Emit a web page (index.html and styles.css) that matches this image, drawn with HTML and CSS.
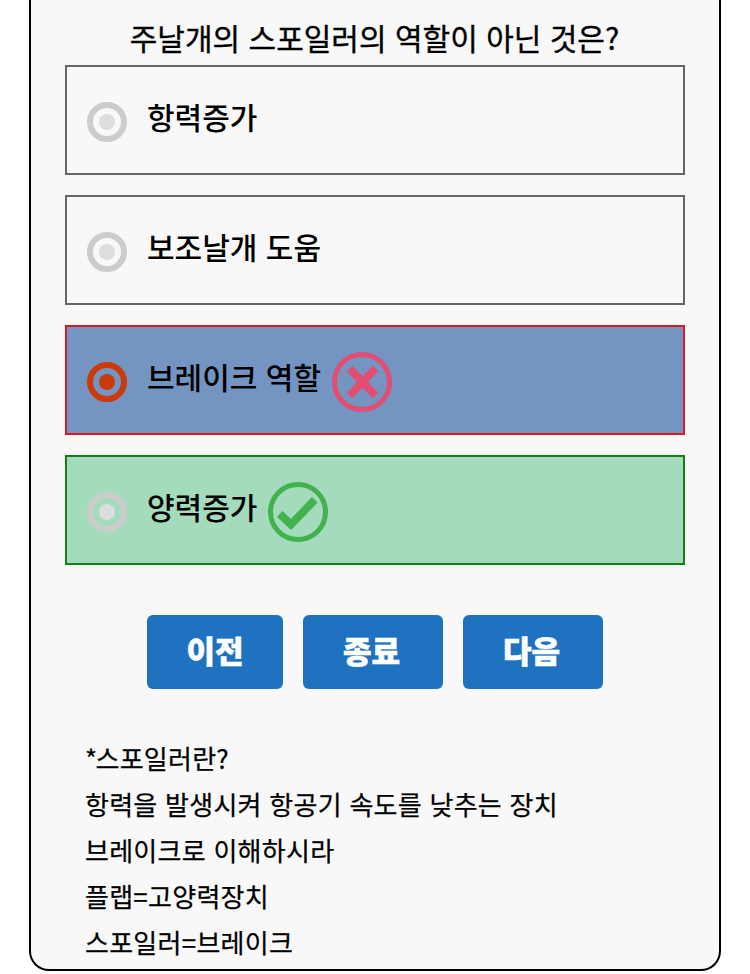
FILE: index.html
```
<!DOCTYPE html>
<html lang="ko">
<head>
<meta charset="utf-8">
<title>Quiz</title>
<link rel="stylesheet" href="styles.css">
</head>
<body>
<main class="quiz">
  <h1 class="question">주날개의 스포일러의 역할이 아닌 것은?</h1>
  <ul class="options">
    <li class="option"><svg class="radio" viewBox="0 0 40 40"><circle class="ring" cx="20" cy="20" r="17"/><circle class="dot" cx="20" cy="20" r="8"/></svg><span class="label">항력증가</span></li>
    <li class="option"><svg class="radio" viewBox="0 0 40 40"><circle class="ring" cx="20" cy="20" r="17"/><circle class="dot" cx="20" cy="20" r="8"/></svg><span class="label">보조날개 도움</span></li>
    <li class="option wrong"><svg class="radio" viewBox="0 0 40 40"><circle class="ring" cx="20" cy="20" r="17"/><circle class="dot" cx="20" cy="20" r="8"/></svg><span class="label">브레이크 역할</span>
      <svg class="mark" viewBox="0 0 60 60"><circle cx="30" cy="30" r="27.5"/><path d="M17.5 16.5L43.5 43.5M43.5 16.5L17.5 43.5"/></svg></li>
    <li class="option correct"><svg class="radio" viewBox="0 0 40 40"><circle class="ring" cx="20" cy="20" r="17"/><circle class="dot" cx="20" cy="20" r="8"/></svg><span class="label">양력증가</span>
      <svg class="mark" viewBox="0 0 60 60"><circle cx="30" cy="30" r="27.5"/><path d="M11.7 32L23 42.5L46.8 17.8"/></svg></li>
  </ul>
  <nav class="actions">
    <button class="prev">이전</button><button>종료</button><button>다음</button>
  </nav>
  <div class="notes">
    <p><span class="star">*</span>스포일러란?</p>
    <p>항력을 발생시켜 항공기 속도를 낮추는 장치</p>
    <p>브레이크로 이해하시라</p>
    <p>플랩=고양력장치</p>
    <p>스포일러=브레이크</p>
  </div>
</main>
</body>
</html>
```
FILE: styles.css
```
* { box-sizing: border-box; }
html { background: #fff; }
body { margin: 0; height: 974px; overflow: hidden; color: #000; font-family: "Noto Sans CJK KR", sans-serif; }
.quiz { width: 692px; height: 971px; margin-left: 29px; padding: 16px 34px 0; border: 2px solid #000; border-top: 0; border-radius: 0 0 20px 20px; background: #f8f8f8; }
.question { margin: 0 0 0 -1px; height: 49px; line-height: 43px; font-size: 30px; font-weight: 400; -webkit-text-stroke: .35px #000; text-align: center; white-space: nowrap; }
.options { margin: 0; padding: 0; list-style: none; display: grid; gap: 20px; }
.option { height: 110px; border: 2px solid #666; padding: 3px 0 0 20px; display: flex; align-items: center; }
.radio { width: 40px; height: 40px; }
.ring { fill: none; stroke: #ccc; stroke-width: 6; }
.dot { fill: #ddd; }
.label { margin: 0 11px 11px 20px; font-size: 30px; line-height: 44px; font-weight: 500; white-space: nowrap; }
.wrong { background: #7495c2; border-color: #dc1820; }
.wrong .ring { stroke: #cc3a0a; }
.wrong .dot { fill: #cc3a0a; }
.correct { background: #a5dbbd; border-color: #128012; }
.mark { width: 60px; height: 60px; fill: none; stroke-width: 5; }
.mark path { stroke-width: 8; }
.wrong .mark { stroke: #e24e72; }
.correct .mark { stroke: #42b24e; }
.actions { display: flex; justify-content: center; gap: 20px; margin-top: 50px; }
button { width: 140px; height: 74px; padding: 0 3px 6px 0; border: 0; border-radius: 6px; background: #1e72bf; color: #fff; font: 900 31px "Noto Sans CJK KR", sans-serif; -webkit-text-stroke: .6px #fff; white-space: nowrap; }
.prev { width: 136px; padding-right: 0; }
.notes { margin: 46px 0 0 20px; font-size: 26px; line-height: 46px; letter-spacing: .26px; -webkit-text-stroke: .25px #000; white-space: nowrap; }
.notes p { margin: 0; }
.star { letter-spacing: -1.7px; }
```
